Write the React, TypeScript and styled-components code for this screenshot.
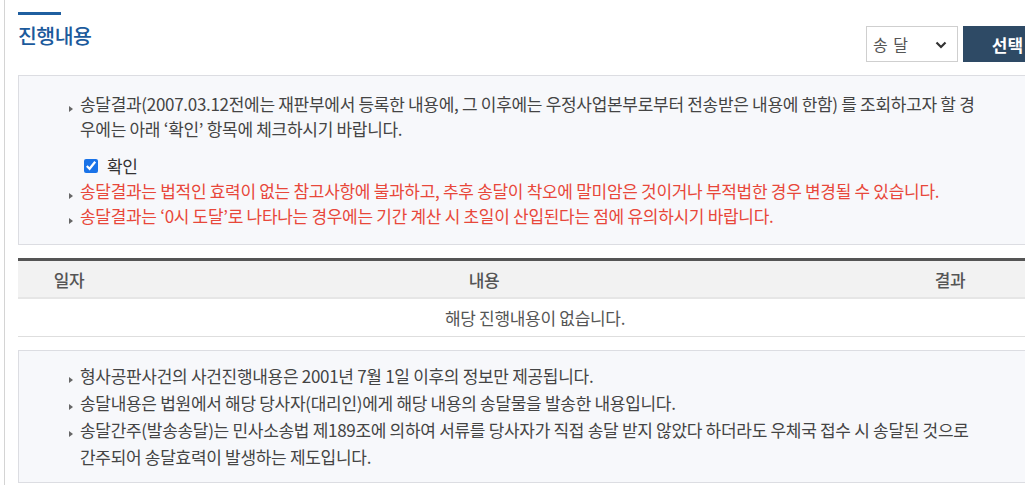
import React from 'react'
import styled, { createGlobalStyle } from 'styled-components'

const GlobalStyle = createGlobalStyle`
  html, body {
    margin: 0;
    padding: 0;
    background: #fff;
    overflow: hidden;
  }
  body {
    font-family: "Noto Sans CJK KR", "Noto Sans", sans-serif;
    color: #444;
  }
`

interface Note {
    _text: string,
    _red?: boolean
}

const topNotes: Note[] = [
    { _text: '송달결과(2007.03.12전에는 재판부에서 등록한 내용에, 그 이후에는 우정사업본부로부터 전송받은 내용에 한함) 를 조회하고자 할 경우에는 아래 ‘확인’ 항목에 체크하시기 바랍니다.' },
]
const redNotes: Note[] = [
    { _text: '송달결과는 법적인 효력이 없는 참고사항에 불과하고, 추후 송달이 착오에 말미암은 것이거나 부적법한 경우 변경될 수 있습니다.', _red: true },
    { _text: '송달결과는 ‘0시 도달’로 나타나는 경우에는 기간 계산 시 초일이 산입된다는 점에 유의하시기 바랍니다.', _red: true },
]
const bottomNotes: Note[] = [
    { _text: '형사공판사건의 사건진행내용은 2001년 7월 1일 이후의 정보만 제공됩니다.' },
    { _text: '송달내용은 법원에서 해당 당사자(대리인)에게 해당 내용의 송달물을 발송한 내용입니다.' },
    { _text: '송달간주(발송송달)는 민사소송법 제189조에 의하여 서류를 당사자가 직접 송달 받지 않았다 하더라도 우체국 접수 시 송달된 것으로 간주되어 송달효력이 발생하는 제도입니다.' },
]

const App: React.FC = () => {
    return (
        <>
            <GlobalStyle />
            <Frame>
                <Content>
                    <TitleRow>
                        <Title>진행내용</Title>
                        <Controls>
                            <SelectWrap>
                                <Select defaultValue="send">
                                    <option value="send">송 달</option>
                                </Select>
                                <Chevron width="12" height="8" viewBox="0 0 12 8">
                                    <path d="M1.5 1.5 L6 6 L10.5 1.5" fill="none" stroke="#333" strokeWidth="2.2" />
                                </Chevron>
                            </SelectWrap>
                            <Button>선택</Button>
                        </Controls>
                    </TitleRow>

                    <InfoBox $top={15} $bottom={16} $line={25}>
                        <NoteList>
                            {topNotes.map((n, i) => (
                                <NoteItem key={i} $red={n._red}>{n._text}</NoteItem>
                            ))}
                        </NoteList>
                        <CheckRow>
                            <Check type="checkbox" defaultChecked id="confirm" />
                            <CheckLabel htmlFor="confirm">확인</CheckLabel>
                        </CheckRow>
                        <NoteList>
                            {redNotes.map((n, i) => (
                                <NoteItem key={i} $red={n._red}>{n._text}</NoteItem>
                            ))}
                        </NoteList>
                    </InfoBox>

                    <Table>
                        <colgroup>
                            <col style={{ width: 102 }} />
                            <col />
                            <col style={{ width: 204 }} />
                        </colgroup>
                        <thead>
                            <tr>
                                <Th>일자</Th>
                                <Th>내용</Th>
                                <Th>결과</Th>
                            </tr>
                        </thead>
                        <tbody>
                            <tr>
                                <Td colSpan={3}>해당 진행내용이 없습니다.</Td>
                            </tr>
                        </tbody>
                    </Table>

                    <InfoBox $top={11} $bottom={12} $line={27} $gap={13} $keepWords>
                        <NoteList>
                            {bottomNotes.map((n, i) => (
                                <NoteItem key={i}>{n._text}</NoteItem>
                            ))}
                        </NoteList>
                    </InfoBox>
                </Content>
            </Frame>
        </>
    )
}

export default App

const Frame = styled.div`
    margin-left: 4px;
    border-left: 1px solid #d4d4d4;
    padding-left: 13px;
    min-height: 485px;
    width: 1060px;
`

const Content = styled.div`
    width: 1034px;
`

const TitleRow = styled.div`
    display: flex;
    justify-content: space-between;
    align-items: flex-start;
    padding-top: 12px;
    height: 75px;
    box-sizing: border-box;
`

const Title = styled.h2`
    margin: 0;
    position: relative;
    padding-top: 8px;
    font-size: 20.5px;
    font-weight: 500;
    letter-spacing: -0.5px;
    line-height: 30px;
    color: #1b5a9c;
    &::before {
        content: '';
        position: absolute;
        left: 0;
        top: 0;
        width: 43px;
        height: 3px;
        background: #1f5fa0;
    }
`

const Controls = styled.div`
    display: flex;
    gap: 5px;
    margin-top: 14px;
`

const SelectWrap = styled.div`
    position: relative;
    width: 92px;
    height: 36px;
`

const Select = styled.select`
    appearance: none;
    width: 100%;
    height: 100%;
    border: 1px solid #cfcfcf;
    background: #fff;
    padding: 0 0 0 6px;
    font-family: "Noto Sans CJK KR", sans-serif;
    font-size: 16px;
    letter-spacing: 1px;
    color: #555;
    outline: none;
`

const Chevron = styled.svg`
    position: absolute;
    right: 11px;
    top: 15px;
    pointer-events: none;
`

const Button = styled.button`
    width: 89px;
    height: 36px;
    border: 0;
    background: #2e4a65;
    color: #fff;
    font-family: "Noto Sans CJK KR", sans-serif;
    font-size: 17px;
    font-weight: 700;
    padding: 0;
`

const InfoBox = styled.div<{ $top: number, $bottom: number, $line: number, $gap?: number, $keepWords?: boolean }>`
    margin-top: ${p => p.$gap ?? 0}px;
    background: #f7f8fb;
    border: 1px solid #dcdde2;
    padding: ${p => p.$top}px 0 ${p => p.$bottom}px 48px;
    line-height: ${p => p.$line}px;
    font-size: 17px;
    letter-spacing: -0.3px;
    word-break: ${p => p.$keepWords ? 'keep-all' : 'normal'};
`

const NoteList = styled.ul`
    list-style: none;
    margin: 0;
    padding: 0;
    padding-right: 66px;
`

const NoteItem = styled.li<{ $red?: boolean }>`
    position: relative;
    padding-left: 13px;
    color: ${p => p.$red ? '#e8473a' : '#444'};
    &::before {
        content: '';
        position: absolute;
        left: 2px;
        top: 15px;
        border-left: 4px solid #666;
        border-top: 3px solid transparent;
        border-bottom: 3px solid transparent;
    }
`

const CheckRow = styled.div`
    display: flex;
    align-items: center;
    gap: 9px;
    padding-left: 17px;
    margin-top: 12px;
    height: 25px;
`

const Check = styled.input`
    margin: 0;
    width: 14px;
    height: 14px;
    accent-color: #1a73e8;
`

const CheckLabel = styled.label`
    color: #333;
`

const Table = styled.table`
    width: 100%;
    margin-top: 13px;
    border-collapse: collapse;
    border-top: 3px solid #555;
    font-size: 17px;
    letter-spacing: -0.3px;
`

const Th = styled.th`
    height: 36px;
    padding: 0;
    background: #f2f2f2;
    border-bottom: 2px solid #e6e6e6;
    color: #555;
    font-weight: 500;
    text-align: center;
`

const Td = styled.td`
    height: 37px;
    padding: 0;
    border-bottom: 1px solid #dedede;
    color: #555;
    text-align: center;
`
